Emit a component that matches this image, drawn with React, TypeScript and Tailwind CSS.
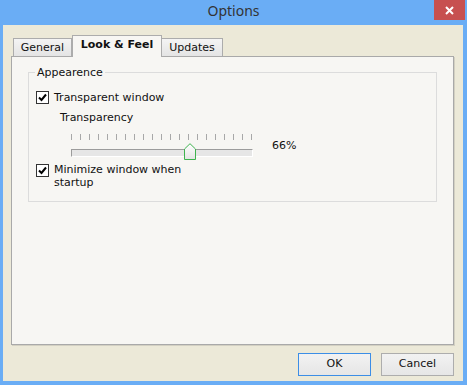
import React from "react"

const TICKS = Array.from({ length: 21 }, (_, i) => i)

function CheckBox({ checked }: { checked: boolean }) {
  return (
    <div className="w-[13px] h-[13px] shrink-0 border border-[#333333] bg-white flex items-center justify-center">
      {checked && (
        <svg width="9" height="9" viewBox="0 0 9 9">
          <path d="M1 4.5 L3.5 7 L8 1.5" fill="none" stroke="#000" strokeWidth="2" />
        </svg>
      )}
    </div>
  )
}

function Slider({ value }: { value: number }) {
  const left = Math.round((value / 100) * 171)
  return (
    <div className="relative w-[182px] h-[23px]">
      <div className="flex h-[6px]">
        {TICKS.map((t) => (
          <div key={t} className="w-[9px] shrink-0">
            <div className="w-px h-[6px] bg-[#a8a8a8]" />
          </div>
        ))}
      </div>
      <div className="mt-[9px] h-[8px] w-[182px] border-t border-l border-[#9c9c9c] border-b border-b-white border-r border-r-white bg-[#e6e6e6]" />
      <svg
        className="absolute top-[9px]"
        style={{ left }}
        width="12"
        height="17"
        viewBox="0 0 12 17"
      >
        <defs>
          <linearGradient id="thumb" x1="0" y1="0" x2="0" y2="1">
            <stop offset="0" stopColor="#ffffff" />
            <stop offset="1" stopColor="#e4e4e4" />
          </linearGradient>
        </defs>
        <path d="M0.5 16.5 L0.5 6 L6 0.7 L11.5 6 L11.5 16.5 Z" fill="url(#thumb)" stroke="#3fb34f" strokeWidth="1" />
      </svg>
    </div>
  )
}

export default function App() {
  return (
    <div className="w-[467px] h-[385px] bg-[#6aadf5] flex flex-col" style={{ fontFamily: '"DejaVu Sans", Verdana, sans-serif' }}>
      <div className="relative h-[25px] flex justify-center shrink-0">
        <span className="text-[14px] leading-[22px] text-[#333333]" style={{ fontFamily: '"Noto Sans", "Open Sans", sans-serif' }}>
          Options
        </span>
        <div className="absolute right-[2px] top-0 w-[31px] h-[20px] bg-[#c75050] flex items-center justify-center">
          <svg width="9" height="9" viewBox="0 0 9 9">
            <path d="M1 1 L8 8 M8 1 L1 8" stroke="#ffffff" strokeWidth="2" />
          </svg>
        </div>
      </div>

      <div className="ml-[3px] mr-[4px] h-[356px] bg-[#ece9d8] pl-[8px] pr-[9px] pt-[10px] flex flex-col">
        <div className="flex items-end h-[21px] pl-[2px] text-[11px] text-[#111111]">
          <div className="w-[59px] h-[18px] border border-b-0 border-[#acacac] bg-gradient-to-b from-[#f4f4f4] to-[#e4e4e4] flex items-center justify-center pt-px">
            General
          </div>
          <div className="relative z-10 -mb-px w-[90px] h-[22px] border border-b-0 border-[#acacac] bg-[#f7f6f3] flex items-center justify-center font-bold pb-[2px]">
            Look &amp; Feel
          </div>
          <div className="w-[61px] h-[18px] border border-b-0 border-l-0 border-[#acacac] bg-gradient-to-b from-[#f4f4f4] to-[#e4e4e4] flex items-center justify-center pt-px">
            Updates
          </div>
        </div>

        <div className="h-[289px] border border-[#a9a9a9] bg-[#f7f6f3] shadow-[1px_1px_0_#d3d0c2] pt-[15px] px-[16px] text-[11px] text-[#111111]">
          <div className="relative h-[130px] border border-[#dcdcdc] pl-[7px] pt-[18px]">
            <span className="absolute -top-[7px] left-[6px] px-[2px] leading-[13px] bg-[#f7f6f3]">Appearence</span>

            <div className="flex items-center gap-[5px] h-[13px]">
              <CheckBox checked />
              <span className="leading-[13px]">Transparent window</span>
            </div>

            <div className="mt-[7px] ml-[24px] leading-[13px]">Transparency</div>

            <div className="mt-[10px] ml-[35px] flex items-center gap-[19px]">
              <Slider value={66} />
              <span className="leading-[13px] pb-[1px]">66%</span>
            </div>

            <div className="mt-[7px] flex items-start gap-[5px]">
              <CheckBox checked />
              <span className="w-[140px] leading-[13px] -mt-px">Minimize window when startup</span>
            </div>
          </div>
        </div>

        <div className="mt-[8px] flex justify-end gap-[10px] text-[11px] text-[#111111]">
          <button className="w-[73px] h-[23px] border border-[#3c8ee6] bg-gradient-to-b from-[#f2f2f2] to-[#e6e6e6]">OK</button>
          <button className="w-[73px] h-[23px] border border-[#adadad] bg-gradient-to-b from-[#f2f2f2] to-[#e6e6e6]">Cancel</button>
        </div>
      </div>
    </div>
  )
}
